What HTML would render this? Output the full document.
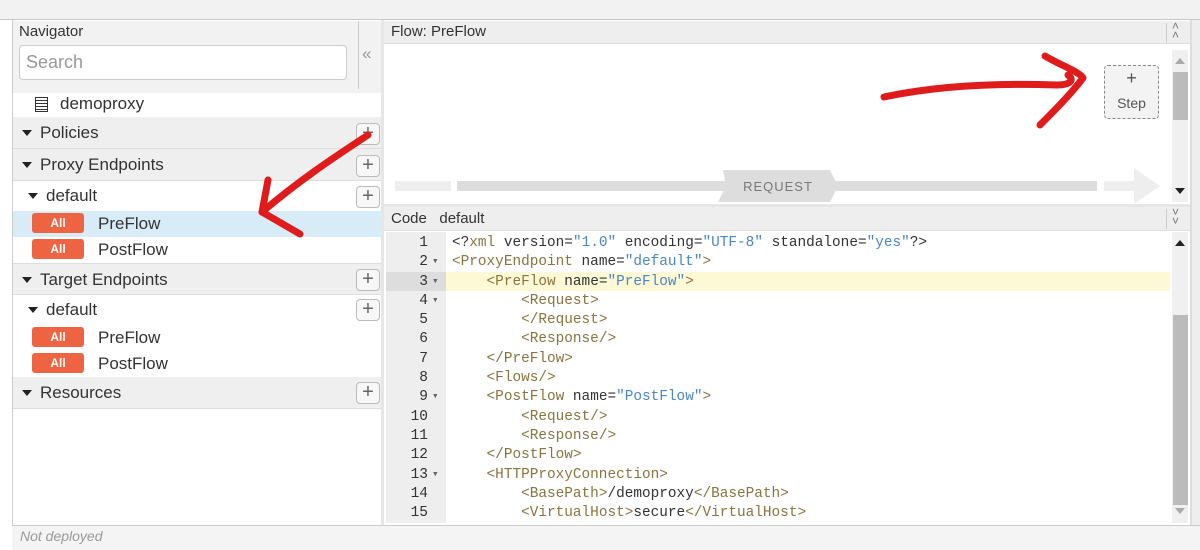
<!DOCTYPE html>
<html><head><meta charset="utf-8"><style>
*{margin:0;padding:0;box-sizing:border-box}
body{width:1200px;height:550px;overflow:hidden;background:#fff;font-family:"Liberation Sans",sans-serif;position:relative;color:#222}
.a{position:absolute}
.row{position:absolute;left:13px;width:368px;font-size:17px;color:#333}
.gray{background:#efefef;border-bottom:1px solid #ddd}
.tri{position:absolute;width:0;height:0;border-left:5px solid transparent;border-right:5px solid transparent;border-top:6px solid #222}
.plus{position:absolute;left:356px;width:24px;height:22px;border:1px solid #bbb;border-radius:4px;background:#f7f7f7;color:#666;font-size:20px;line-height:19px;text-align:center}
.all{position:absolute;left:32px;width:52px;height:20px;background:#ee6442;border-radius:3px;color:#fff;font-size:12px;font-weight:bold;text-align:center;line-height:20px}
.code{font-family:"Liberation Mono",monospace;font-size:14.4px;white-space:pre;line-height:19.3px}
.t{color:#8a7440}.s{color:#4a86c8}.k{color:#333}
.ln{position:absolute;left:386px;width:42px;text-align:right;font-family:"Liberation Mono",monospace;font-size:14.5px;color:#333}
</style></head><body>
<div class="a" style="left:0;top:0;width:1200px;height:20px;background:#f2f2f2;border-bottom:1px solid #c8c8c8"></div>
<div class="a" style="left:0;top:20px;width:12px;height:530px;background:#fff"></div>
<div class="a" style="left:12px;top:20px;width:1px;height:530px;background:#ccc"></div>
<!-- navigator -->
<div class="a" style="left:13px;top:21px;width:368px;height:72px;background:#f2f2f2"></div>
<div class="a" style="left:19px;top:23px;font-size:15px;color:#333">Navigator</div>
<div class="a" style="left:19px;top:45px;width:328px;height:35px;background:#fff;border:1px solid #ccc;border-radius:4px;font-size:18px;color:#999;padding:6px 6px">Search</div>
<div class="a" style="left:358px;top:21px;width:1px;height:68px;background:#ccc"></div>
<div class="a" style="left:362px;top:44px;font-size:17px;color:#999">«</div>
<div class="a" style="left:381px;top:20px;width:3px;height:505px;background:#e6e6e6"></div>

<div class="row" style="top:93px;height:24px;background:#fff"><span class="a" style="left:22px;top:4px;width:13px;height:15px;border:1.5px solid #333;background:repeating-linear-gradient(#fff 0 2px,#333 2px 3px)"></span><span class="a" style="left:47px;top:1px">demoproxy</span></div>
<div class="row gray" style="top:117px;height:32px"><span class="tri" style="left:9px;top:13px"></span><span class="a" style="left:27px;top:6px">Policies</span></div>
<div class="row gray" style="top:149px;height:32px"><span class="tri" style="left:9px;top:13px"></span><span class="a" style="left:27px;top:6px">Proxy Endpoints</span></div>
<div class="row" style="top:181px;height:30px;background:#fff"><span class="tri" style="left:15px;top:12px"></span><span class="a" style="left:33px;top:5px">default</span></div>
<div class="row" style="top:211px;height:26px;background:#d7ecf7"><span class="a" style="left:85px;top:3px">PreFlow</span></div>
<div class="row" style="top:237px;height:26px;background:#fff"><span class="a" style="left:85px;top:3px">PostFlow</span></div>
<div class="row gray" style="top:263px;height:32px;border-top:1px solid #ddd"><span class="tri" style="left:9px;top:13px"></span><span class="a" style="left:27px;top:6px">Target Endpoints</span></div>
<div class="row" style="top:295px;height:30px;background:#fff"><span class="tri" style="left:15px;top:12px"></span><span class="a" style="left:33px;top:5px">default</span></div>
<div class="row" style="top:325px;height:26px"><span class="a" style="left:85px;top:3px">PreFlow</span></div>
<div class="row" style="top:351px;height:26px"><span class="a" style="left:85px;top:3px">PostFlow</span></div>
<div class="row gray" style="top:377px;height:32px"><span class="tri" style="left:9px;top:13px"></span><span class="a" style="left:27px;top:6px">Resources</span></div>
<div class="all" style="top:213px">All</div><div class="all" style="top:239px">All</div>
<div class="all" style="top:327px">All</div><div class="all" style="top:353px">All</div>
<div class="plus" style="top:123px">+</div><div class="plus" style="top:155px">+</div><div class="plus" style="top:186px">+</div>
<div class="plus" style="top:269px">+</div><div class="plus" style="top:299px">+</div><div class="plus" style="top:382px">+</div>

<div class="a" style="left:12px;top:525px;width:1188px;height:25px;background:#f4f4f4;border-top:1px solid #ccc"></div>
<div class="a" style="left:20px;top:528px;font-size:14px;color:#999;font-style:italic">Not deployed</div>

<!-- flow panel -->
<div class="a" style="left:384px;top:21px;width:806px;height:23px;background:#eee;border-bottom:1px solid #ddd"></div>
<div class="a" style="left:391px;top:23px;font-size:15px;color:#333">Flow: PreFlow</div>
<div class="a" style="left:1166px;top:23px;width:1px;height:20px;background:#ccc"></div>
<div class="a" style="left:1172px;top:22px;font-size:12px;color:#777;line-height:9px">˄<br>˄</div>
<div class="a" style="left:1190px;top:20px;width:10px;height:505px;background:#eee;border-left:2px solid #ddd"></div>
<div class="a" style="left:1172px;top:50px;width:16px;height:152px;background:#f0f0f0"></div>
<div class="a" style="left:1173px;top:72px;width:15px;height:48px;background:#bbb"></div>
<div class="a" style="left:1175px;top:58px;border-left:5px solid transparent;border-right:5px solid transparent;border-bottom:6px solid #aaa"></div>
<div class="a" style="left:1175px;top:188px;border-left:5px solid transparent;border-right:5px solid transparent;border-top:6px solid #222"></div>
<div class="a" style="left:1104px;top:65px;width:55px;height:54px;border:1.5px dashed #888;border-radius:4px;background:#f3f3f3;text-align:center;color:#555;font-size:14px;line-height:24px;padding-top:0px"><span style="font-size:18px">+</span><br>Step</div>
<div class="a" style="left:395px;top:181px;width:56px;height:10px;background:#eee"></div>
<div class="a" style="left:457px;top:181px;width:640px;height:10px;background:#ddd"></div>
<svg class="a" style="left:718px;top:170px" width="120" height="32"><polygon points="5,0 112,0 120,16 112,32 0,32 8,16" fill="#ddd"/><text x="60" y="21" font-family="Liberation Sans" font-size="13" fill="#777" text-anchor="middle" letter-spacing="1">REQUEST</text></svg>
<svg class="a" style="left:1104px;top:168px" width="60" height="36"><polygon points="0,13 30,13 30,0 56,18 30,36 30,23 0,23" fill="#eee"/></svg>
<div class="a" style="left:384px;top:204px;width:806px;height:3px;background:#e6e6e6"></div>

<!-- code panel -->
<div class="a" style="left:384px;top:207px;width:806px;height:24px;background:#eee;border-bottom:1px solid #ddd"></div>
<div class="a" style="left:391px;top:210px;font-size:15px;color:#333">Code&nbsp;&nbsp; default</div>
<div class="a" style="left:1166px;top:209px;width:1px;height:20px;background:#ccc"></div>
<div class="a" style="left:1172px;top:208px;font-size:12px;color:#777;line-height:9px">˅<br>˅</div>
<div class="a" style="left:386px;top:232px;width:60px;height:291px;background:#eee"></div>
<div class="a" style="left:386px;top:272px;width:60px;height:19px;background:#ddd"></div>
<div class="a" style="left:446px;top:272px;width:724px;height:19px;background:#fdf8d6"></div>
<div class="a" style="left:1172px;top:232px;width:16px;height:291px;background:#f0f0f0"></div>
<div class="a" style="left:1173px;top:315px;width:15px;height:190px;background:#bbb"></div>
<div class="a" style="left:1175px;top:240px;border-left:5px solid transparent;border-right:5px solid transparent;border-bottom:6px solid #222"></div>
<div class="a" style="left:1175px;top:508px;border-left:5px solid transparent;border-right:5px solid transparent;border-top:6px solid #aaa"></div>
<div class="ln code" style="top:234px">1
2
3
4
5
6
7
8
9
10
11
12
13
14
15</div>
<div class="a code" style="left:432px;top:234px;font-size:11px;color:#666">
▾
▾
▾




▾



▾</div>
<div class="a code" style="left:452px;top:234px"><span class="k">&lt;?</span><span class="t">xml</span> <span class="k">version=</span><span class="s">"1.0"</span> <span class="k">encoding=</span><span class="s">"UTF-8"</span> <span class="k">standalone=</span><span class="s">"yes"</span><span class="k">?&gt;</span>
<span class="t">&lt;ProxyEndpoint</span> <span class="k">name=</span><span class="s">"default"</span><span class="t">&gt;</span>
    <span class="t">&lt;PreFlow</span> <span class="k">name=</span><span class="s">"PreFlow"</span><span class="t">&gt;</span>
        <span class="t">&lt;Request&gt;</span>
        <span class="t">&lt;/Request&gt;</span>
        <span class="t">&lt;Response/&gt;</span>
    <span class="t">&lt;/PreFlow&gt;</span>
    <span class="t">&lt;Flows/&gt;</span>
    <span class="t">&lt;PostFlow</span> <span class="k">name=</span><span class="s">"PostFlow"</span><span class="t">&gt;</span>
        <span class="t">&lt;Request/&gt;</span>
        <span class="t">&lt;Response/&gt;</span>
    <span class="t">&lt;/PostFlow&gt;</span>
    <span class="t">&lt;HTTPProxyConnection&gt;</span>
        <span class="t">&lt;BasePath&gt;</span><span class="k">/demoproxy</span><span class="t">&lt;/BasePath&gt;</span>
        <span class="t">&lt;VirtualHost&gt;</span><span class="k">secure</span><span class="t">&lt;/VirtualHost&gt;</span></div>

<!-- red arrows -->
<svg class="a" style="left:0;top:0" width="1200" height="550">
<g fill="none" stroke="#e01b1b" stroke-width="7" stroke-linecap="round" stroke-linejoin="round">
<path d="M368,135 C330,160 300,180 262,212"/>
<path d="M268,180 L262,212 L300,234"/>
<path d="M884,97 C940,85 1000,83 1057,85 C1070,85 1075,80 1068,75"/>
<path d="M1045,56 C1060,65 1080,72 1083,78 C1070,95 1055,110 1040,125"/>
</g></svg>
</body></html>
